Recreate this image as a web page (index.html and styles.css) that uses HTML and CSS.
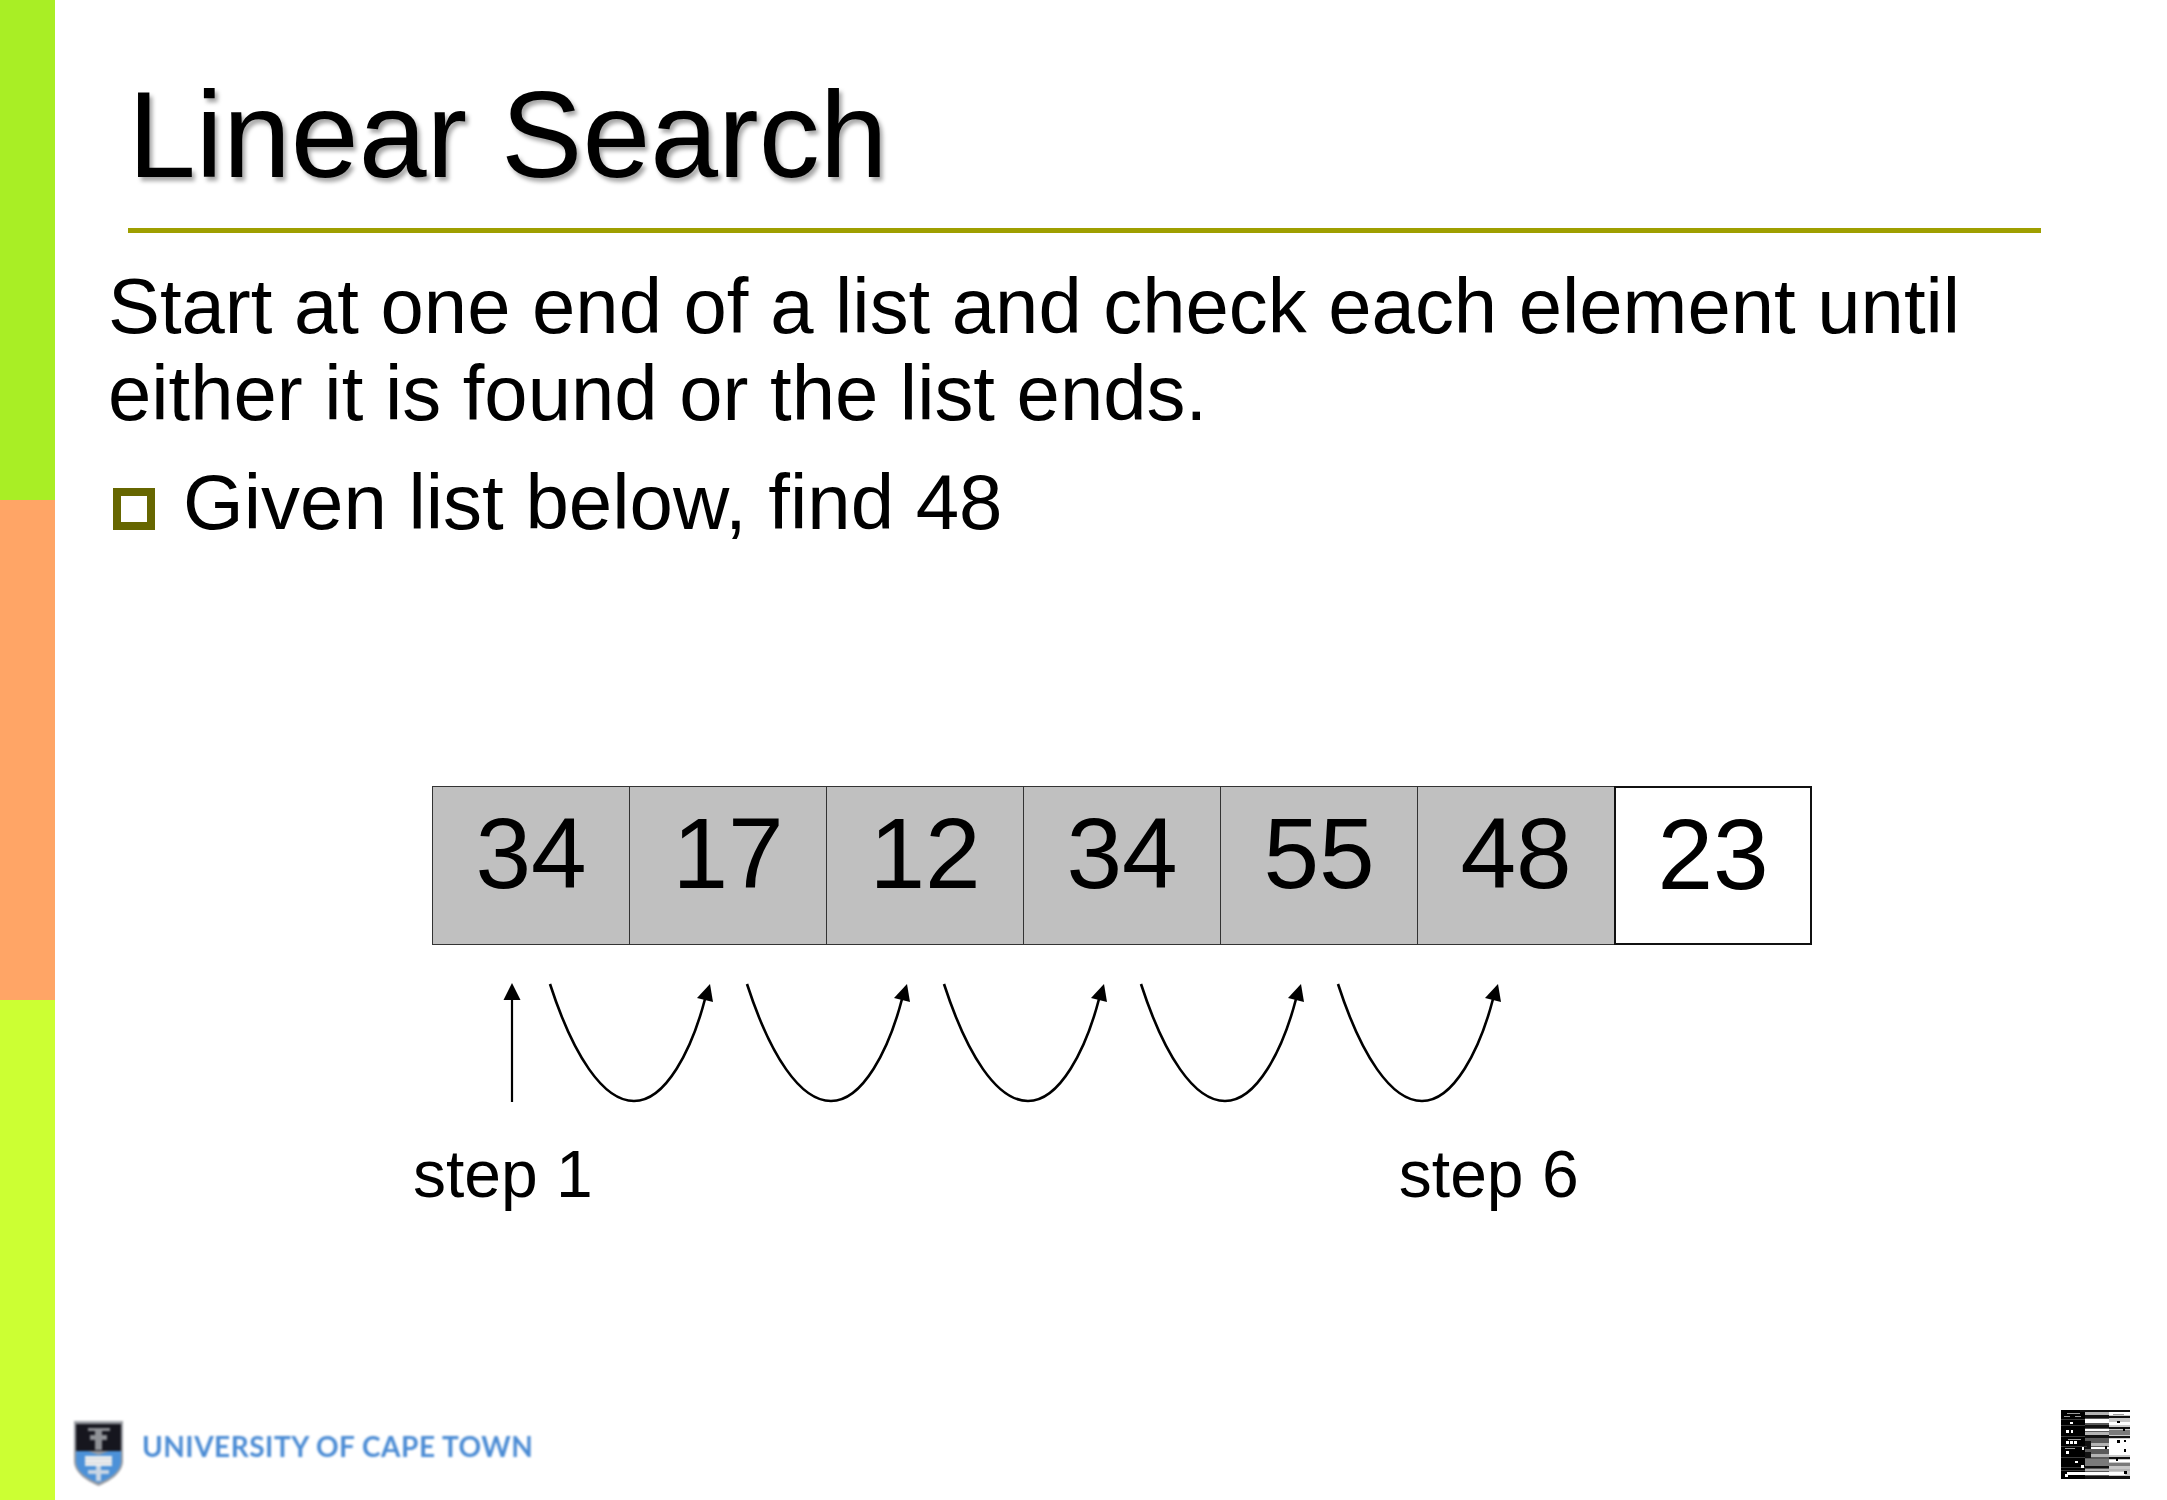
FILE: index.html
```html
<!DOCTYPE html>
<html lang="en">
<head>
<meta charset="utf-8">
<title>Linear Search</title>
<link rel="stylesheet" href="styles.css">
</head>
<body>
<div class="slide">
  <div class="rail">
    <div class="band band-green"></div>
    <div class="band band-orange"></div>
    <div class="band band-lime"></div>
  </div>
  <main class="content">
    <h1 class="title">Linear Search</h1>
    <div class="rule"></div>
    <p class="lead">Start at one end of a list and check each element until<br>either it is found or the list ends.</p>
    <div class="bullet-row"><span class="bullet"></span><span class="bullet-text">Given list below, find 48</span></div>
    <section class="diagram">
      <div class="cells">
        <div class="cell">34</div>
        <div class="cell">17</div>
        <div class="cell">12</div>
        <div class="cell">34</div>
        <div class="cell">55</div>
        <div class="cell">48</div>
        <div class="cell cell-open">23</div>
      </div>
      <svg class="arrows" width="1200" height="122" viewBox="0 0 1200 122">
        <defs>
          <g id="hop">
            <path d="M118 1C141 72 171 118 202 118C234 118 260 66 273 16" fill="none" stroke="#000" stroke-width="2.600"/>
            <path d="M278 1L281 19L265 15Z" fill="#000"/>
          </g>
        </defs>
        <path d="M80 119V14" fill="none" stroke="#000" stroke-width="2.200"/>
        <path d="M80 0L88.500 17H71.500Z" fill="#000"/>
        <use href="#hop"/>
        <use href="#hop" x="197"/>
        <use href="#hop" x="394"/>
        <use href="#hop" x="591"/>
        <use href="#hop" x="788"/>
      </svg>
      <div class="labels">
        <span>step 1</span>
        <span>step 6</span>
      </div>
    </section>
    <footer class="footer">
      <div class="brand">
        <svg class="crest" width="49" height="65" viewBox="0 0 49 65">
          <path d="M0 0H49V40C49 52 36 60 24.500 65C13 60 0 52 0 40Z" fill="#9a9da3"/>
          <path d="M2 3H47V30H2Z" fill="#16161e"/>
          <path d="M2 30H14L24.500 34L35 30H47V40C47 51 35 58 24.500 62C14 58 2 51 2 40Z" fill="#4c91d8"/>
          <path d="M14 7H36V10H28V14H33V19H28V29H21V19H16V14H21V10H14Z" fill="#8f9196"/>
          <path d="M11 35H38V45H11Z" fill="#f1f2f3"/>
          <path d="M11 38H38M11 42H38" stroke="#c2c6cc" stroke-width="1"/>
          <path d="M22 45H27V60H22ZM14 49H35V53H14Z" fill="#c9d6e4"/>
        </svg>
        <span class="brand-name">UNIVERSITY OF CAPE TOWN</span>
      </div>
      <svg class="thumb" width="69" height="69" viewBox="0 0 69 69" shape-rendering="crispEdges">
        <rect width="24" height="69" fill="#000"/>
        <rect x="24" width="24" height="69" fill="#5a5a5a"/>
        <rect x="48" width="21" height="69" fill="#c8c8c8"/>
        <g fill="#111">
          <rect x="19" y="0" width="50" height="2"/><rect x="24" y="5" width="24" height="3"/><rect x="24" y="15" width="24" height="3"/><rect x="24" y="25" width="24" height="3"/><rect x="24" y="31" width="6" height="8"/><rect x="24" y="42" width="6" height="6"/><rect x="24" y="56" width="24" height="2"/><rect x="48" y="6" width="21" height="2"/><rect x="48" y="17" width="21" height="2"/><rect x="48" y="26" width="21" height="2"/><rect x="48" y="47" width="21" height="2"/><rect x="24" y="66" width="45" height="3"/>
        </g>
        <g fill="#fff">
          <rect x="24" y="9" width="24" height="4"/><rect x="24" y="19" width="24" height="2"/><rect x="48" y="29" width="21" height="16"/><rect x="48" y="2" width="21" height="3"/><rect x="48" y="12" width="21" height="3"/><rect x="30" y="37" width="18" height="2"/><rect x="48" y="50" width="21" height="2"/><rect x="6" y="62" width="58" height="3"/>
        </g>
        <g fill="#b4b4b4">
          <rect x="24" y="2" width="24" height="3"/><rect x="24" y="22" width="24" height="3"/><rect x="30" y="33" width="18" height="3"/><rect x="30" y="44" width="18" height="3"/><rect x="24" y="59" width="45" height="2"/>
        </g>
        <g fill="#7a7a7a">
          <rect x="24" y="49" width="24" height="7"/><rect x="48" y="20" width="21" height="5"/><rect x="48" y="53" width="21" height="3"/>
        </g>
        <g fill="#3a3a3a">
          <rect x="0" y="9" width="24" height="1"/><rect x="0" y="15" width="24" height="1"/><rect x="0" y="26" width="24" height="1"/><rect x="0" y="36" width="26" height="1"/><rect x="0" y="47" width="24" height="1"/><rect x="0" y="57" width="24" height="1"/><rect x="0" y="60" width="24" height="1"/>
        </g>
        <g fill="#9a9a9a">
          <rect x="6" y="3" width="13" height="1"/><rect x="3" y="6" width="6" height="1"/><rect x="14" y="6" width="6" height="1"/><rect x="7" y="29" width="13" height="1"/><rect x="52" y="4" width="11" height="1"/><rect x="4" y="38" width="10" height="1"/>
        </g>
        <g fill="#fff">
          <rect x="5" y="20" width="3" height="3"/><rect x="10" y="20" width="2" height="3"/><rect x="9" y="12" width="3" height="2"/><rect x="5" y="31" width="3" height="3"/><rect x="9" y="31" width="3" height="3"/><rect x="13" y="31" width="3" height="3"/><rect x="5" y="41" width="3" height="3"/><rect x="21" y="37" width="2" height="3"/><rect x="14" y="51" width="3" height="2"/><rect x="20" y="55" width="3" height="3"/><rect x="4" y="64" width="3" height="3"/>
        </g>
        <g fill="#000">
          <rect x="56" y="11" width="3" height="2"/><rect x="62" y="18" width="2" height="3"/><rect x="56" y="30" width="3" height="3"/><rect x="63" y="30" width="2" height="2"/><rect x="63" y="39" width="2" height="3"/><rect x="44" y="36" width="2" height="3"/><rect x="55" y="48" width="2" height="3"/><rect x="63" y="61" width="3" height="3"/>
        </g>
      </svg>
    </footer>
  </main>
</div>
</body>
</html>
```

FILE: styles.css
```css
html, body {
  margin: 0;
  padding: 0;
  background: #fff;
}

.slide {
  display: flex;
  width: 2167px;
  height: 1500px;
  overflow: hidden;
  background: #fff;
  color: #000;
  font-family: "Liberation Sans", Arial, sans-serif;
}

.rail {
  display: flex;
  flex-direction: column;
  flex: 0 0 55px;
}

.band {
  flex: 1;
}

.band-green { background: #a9ee25; }
.band-orange { background: #ffa566; }
.band-lime { background: #ccff33; }

.content {
  display: flex;
  flex-direction: column;
  flex: 1;
  min-width: 0;
}

.title {
  margin: 75px 0 33px 73px;
  font-size: 122px;
  line-height: 120px;
  font-weight: 400;
  text-shadow: 3px 4px 4px rgba(0, 0, 0, 0.35);
}

.rule {
  width: 1913px;
  height: 5px;
  margin-left: 73px;
  background: #9f9f00;
}

.lead {
  margin: 30px 0 22px 53px;
  font-size: 77.85px;
  line-height: 87px;
}

.bullet-row {
  display: flex;
  align-items: flex-end;
  margin-left: 58px;
  gap: 28px;
  font-size: 78px;
  line-height: 87px;
}

.bullet {
  box-sizing: border-box;
  flex: 0 0 42px;
  height: 42px;
  margin-bottom: 16px;
  border: 8px solid #666600;
  background: #fff;
}

.diagram {
  display: flex;
  flex-direction: column;
  margin: 240px 0 0 377px;
}

.cells {
  display: flex;
  height: 159px;
}

.cell {
  box-sizing: border-box;
  flex: 0 0 197px;
  height: 159px;
  border: 1px solid #333;
  border-right: 0;
  background: #c0c0c0;
  font-size: 100px;
  line-height: 133px;
  text-align: center;
}

.cell-open {
  flex-basis: 198px;
  border: 2px solid #111;
  background: #fff;
}

.arrows {
  display: block;
  margin-top: 38px;
}

.labels {
  display: flex;
  gap: 806px;
  margin: 36px 0 0 -19px;
  font-size: 66px;
  line-height: 66px;
}

.footer {
  display: flex;
  justify-content: space-between;
  align-items: flex-start;
  margin-top: auto;
  padding: 0 37px 14px 19px;
}

.brand {
  display: flex;
  align-items: flex-start;
  gap: 19px;
  margin-top: 11px;
  filter: blur(0.8px);
}

.crest {
  display: block;
}

.brand-name {
  margin-top: 7px;
  color: #4a8bd4;
  font-family: Lato, "Liberation Sans", sans-serif;
  font-size: 28px;
  line-height: 36px;
  font-weight: 700;
  letter-spacing: 0.5px;
  white-space: nowrap;
}

.thumb {
  display: block;
}
```
